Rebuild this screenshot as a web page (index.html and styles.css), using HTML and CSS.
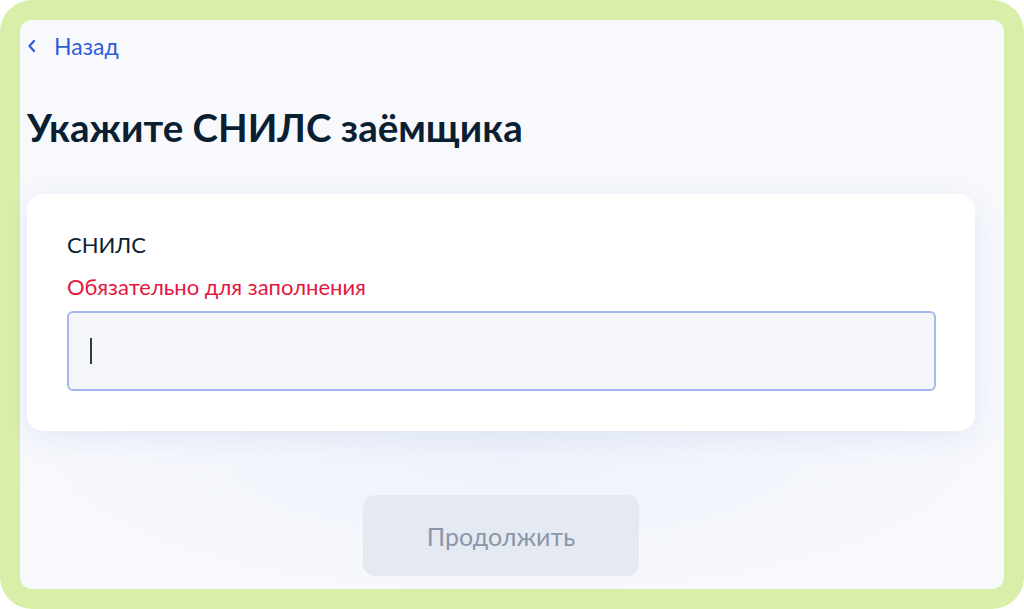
FILE: index.html
```html
<!DOCTYPE html>
<html lang="ru">
<head>
    <meta charset="UTF-8">
    <meta name="viewport" content="width=device-width, initial-scale=1.0">
    <title>СНИЛС заёмщика</title>
    <link rel="stylesheet" href="styles.css">
</head>
<body>
    <div class="frame">
        <div class="page">
            <a class="back" href="#">
                <svg width="10" height="14" viewBox="0 0 10 14"><path d="M7 2 L2.5 7 L7 12" fill="none" stroke="#2f5ed6" stroke-width="2.2" stroke-linecap="round" stroke-linejoin="round"/></svg>
                <span>Назад</span>
            </a>
            <h1 class="heading">Укажите СНИЛС заёмщика</h1>
            <div class="card">
                <div class="label">СНИЛС</div>
                <div class="error">Обязательно для заполнения</div>
                <div class="field"><i class="caret"></i></div>
            </div>
            <div class="actions">
                <button class="next" disabled>Продолжить</button>
            </div>
        </div>
    </div>
</body>
</html>
```

FILE: styles.css
```css
* { margin: 0; padding: 0; box-sizing: border-box; }
body { background: #fff; font-family: Lato, "Noto Sans", sans-serif; }

div.frame {
    height: 609px;
    padding: 20px;
    background: #d9efa9;
    border-radius: 32px;
}
div.page {
    height: 100%;
    padding: 12px 29px 0 7px;
    background: #f8f9fd;
    background-image: radial-gradient(ellipse 520px 160px at 50% 430px, #eef2fb, #f8f9fd);
    border-radius: 12px;
}

a.back {
    display: flex;
    align-items: center;
    gap: 17px;
    color: #2f5ed6;
    font-size: 23px;
    line-height: 28px;
    text-decoration: none;
}
h1.heading {
    margin: 44px 0 0 0;
    color: #0b1f33;
    font-size: 38.5px;
    font-weight: 700;
    line-height: 46px;
}

div.card {
    margin-top: 44px;
    padding: 38px 39px 40px 40px;
    background: #fff;
    border-radius: 16px;
    box-shadow: 0 6px 30px rgba(105, 135, 205, .14);
}
div.label {
    color: #0b1f33;
    font-size: 22px;
    line-height: 26px;
}
div.error {
    margin-top: 16px;
    color: #e3173f;
    font-size: 22px;
    line-height: 26px;
}
div.field {
    display: flex;
    align-items: center;
    margin-top: 11px;
    height: 80px;
    padding-left: 21px;
    background: #f4f6fa;
    border: 2px solid #a3b9ec;
    border-radius: 6px;
}
i.caret {
    display: block;
    width: 2px; height: 26px;
    background: #2f3a4a;
}

div.actions {
    display: flex;
    justify-content: center;
    margin-top: 64px;
}
button.next {
    width: 276px; height: 81px;
    background: #e4e9f2;
    border: 0;
    border-radius: 12px;
    color: #8b97a8;
    font-family: Lato, "Noto Sans", sans-serif;
    font-size: 25px;
}
```
